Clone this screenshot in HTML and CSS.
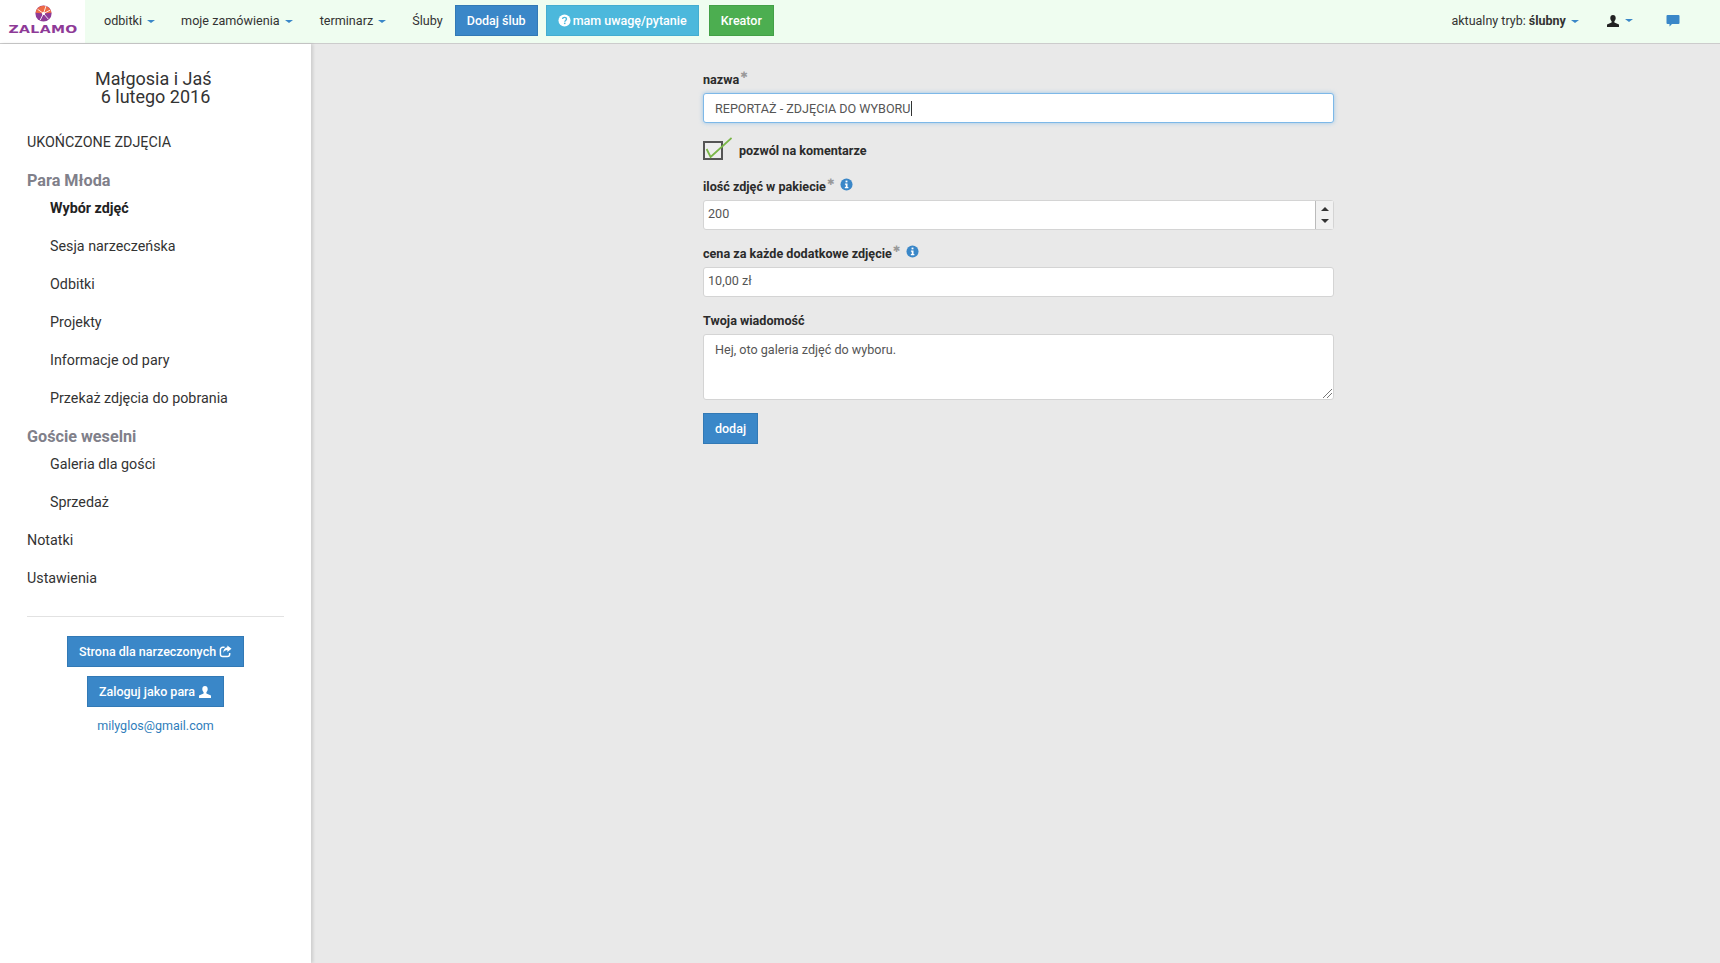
FILE: index.html
```html
<!DOCTYPE html>
<html lang="pl">
<head>
<meta charset="utf-8">
<title>Zalamo</title>
<link rel="stylesheet" href="styles.css">
</head>
<body>
<header class="navbar">
  <a class="logo">
    <svg class="logo-mark" viewBox="0 0 20 20" width="17" height="17">
      <circle cx="10" cy="10" r="9.5" fill="#8e3a97"/>
      <path d="M.6 9A9.5 9.5 0 0 1 19.4 9L10 10Z" fill="#ee6a45"/>
      <path d="M10 10 13 1M10 10 18 6M10 10 16 17M10 10 6 18M10 10 3 5" stroke="#fff" stroke-width="1"/>
      <circle cx="10" cy="10" r="1.8" fill="#fff"/>
    </svg>
    <span class="logo-text">ZALAMO</span>
  </a>
  <nav class="nav-left">
    <a class="nav-link nav-odbitki">odbitki <i class="caret"></i></a>
    <a class="nav-link nav-orders">moje zamówienia <i class="caret"></i></a>
    <a class="nav-link nav-term">terminarz <i class="caret"></i></a>
    <a class="nav-link nav-sluby">Śluby</a>
    <a class="btn btn-blue nav-btn">Dodaj ślub</a>
    <a class="btn btn-cyan nav-btn nav-btn-wide">
      <svg class="ico-q" viewBox="0 0 14 14" width="13" height="13"><circle cx="7" cy="7" r="6.5" fill="#fff"/><path d="M4.9 5.4C5 4.2 5.9 3.6 7 3.6c1.200 0 2.100.7 2.100 1.800 0 1.600-1.800 1.500-1.800 3" fill="none" stroke="#4cb8dc" stroke-width="1.500"/><rect x="6.400" y="9.300" width="1.700" height="1.600" fill="#4cb8dc"/></svg>
      mam uwagę/pytanie</a>
    <a class="btn btn-green nav-btn">Kreator</a>
  </nav>
  <nav class="nav-right">
    <a class="nav-link nav-mode">aktualny tryb: <b>ślubny</b> <i class="caret"></i></a>
    <a class="nav-link nav-user">
      <svg viewBox="0 0 14 14" width="14" height="14"><path class="fill-dark" d="M7 1C5.300 1 4.300 2.300 4.300 4c0 1.300.5 2.500 1.300 3.200v1.200L1 10.500V13h12v-2.500L8.400 8.400V7.200C9.200 6.500 9.700 5.300 9.700 4 9.700 2.300 8.700 1 7 1Z"/></svg>
      <i class="caret"></i></a>
    <a class="nav-link nav-chat">
      <svg viewBox="0 0 14 14" width="14" height="14"><path class="fill-blue" d="M1.500 1h11a1 1 0 0 1 1 1v7a1 1 0 0 1-1 1H6l-2.500 2.500V10h-2a1 1 0 0 1-1-1V2a1 1 0 0 1 1-1Z"/></svg>
    </a>
  </nav>
</header>
<div class="layout">
  <aside class="sidebar">
    <h1 class="couple">Małgosia i Jaś&nbsp;<br>6 lutego 2016</h1>
    <a class="side-top side-first">UKOŃCZONE ZDJĘCIA</a>
    <div class="side-group">Para Młoda</div>
    <a class="side-sub side-sub-first side-active">Wybór zdjęć</a>
    <a class="side-sub">Sesja narzeczeńska</a>
    <a class="side-sub">Odbitki</a>
    <a class="side-sub">Projekty</a>
    <a class="side-sub">Informacje od pary</a>
    <a class="side-sub">Przekaż zdjęcia do pobrania</a>
    <div class="side-group">Goście weselni</div>
    <a class="side-sub side-sub-first">Galeria dla gości</a>
    <a class="side-sub">Sprzedaż</a>
    <a class="side-top">Notatki</a>
    <a class="side-top">Ustawienia</a>
    <hr class="side-rule">
    <div class="side-actions">
      <a class="btn btn-blue side-btn">Strona dla narzeczonych
        <svg viewBox="0 0 14 14" width="13" height="13"><path d="M11.500 8.500V10a2.500 2.500 0 0 1-2.500 2.500H4A2.500 2.500 0 0 1 1.500 10V5A2.500 2.500 0 0 1 4 2.500h2" fill="none" stroke="#fff" stroke-width="1.600"/><path d="M9 0.500 13.500 4 9 7.500V5.500C7 5.500 5.500 6.300 4.700 8.500 4.500 5 6.300 2.700 9 2.500Z" fill="#fff"/></svg>
      </a>
      <a class="btn btn-blue side-btn">Zaloguj jako para
        <svg viewBox="0 0 14 14" width="14" height="14"><path d="M7 1C5.300 1 4.300 2.300 4.300 4c0 1.300.5 2.500 1.300 3.200v1.200L1 10.500V13h12v-2.500L8.400 8.400V7.200C9.200 6.500 9.700 5.300 9.700 4 9.700 2.300 8.700 1 7 1Z" fill="#fff"/></svg>
      </a>
      <a class="side-mail">milyglos@gmail.com</a>
    </div>
  </aside>
  <main class="content">
    <form class="form">
      <div class="label-row"><label class="label">nazwa</label><span class="req">✱</span></div>
      <div class="input input-focus"><span class="val-wide">REPORTAŻ - ZDJĘCIA DO WYBORU</span><i class="cursor"></i></div>

      <div class="check-row">
        <span class="check">
          <svg viewBox="0 0 30 26" width="30" height="26"><path d="M4.600 15 8.600 23 29.600 4" fill="none" stroke="#7ab648" stroke-width="1.800"/></svg>
        </span>
        <label class="label">pozwól na komentarze</label>
      </div>

      <div class="label-row"><label class="label">ilość zdjęć w pakiecie</label><span class="req">✱</span>
        <svg class="info" viewBox="0 0 14 14" width="13" height="13"><circle cx="7" cy="7" r="6.500" fill="#3a87c8"/><rect x="6" y="2.800" width="2" height="1.900" fill="#fff"/><path d="M5.300 6h2.800v3.800h.9V11H5.200V9.800h1V7.200h-.9Z" fill="#fff"/></svg>
      </div>
      <div class="input input-num"><span>200</span>
        <span class="spinner"><i class="spin-up"></i><i class="spin-down"></i></span>
      </div>

      <div class="label-row"><label class="label">cena za każde dodatkowe zdjęcie</label><span class="req">✱</span>
        <svg class="info" viewBox="0 0 14 14" width="13" height="13"><circle cx="7" cy="7" r="6.500" fill="#3a87c8"/><rect x="6" y="2.800" width="2" height="1.900" fill="#fff"/><path d="M5.300 6h2.800v3.800h.9V11H5.200V9.800h1V7.200h-.9Z" fill="#fff"/></svg>
      </div>
      <div class="input input-num"><span>10,00 zł</span></div>

      <div class="label-row"><label class="label">Twoja wiadomość</label></div>
      <div class="textarea">Hej, oto galeria zdjęć do wyboru.
        <svg class="grip" viewBox="0 0 9 9" width="9" height="9"><path d="M0 9 9 0M4 9 9 4" stroke="#777" stroke-width="1"/></svg>
      </div>
      <a class="btn btn-blue submit">dodaj</a>
    </form>
  </main>
</div>
</body>
</html>
```

FILE: styles.css
```css
* { box-sizing: border-box; }
html, body { margin: 0; height: 100%; }
body {
  font-family: Roboto, "Liberation Sans", sans-serif;
  font-size: 13px;
  color: #333;
  background: #e9e9e9;
  overflow: hidden;
}
a { color: inherit; text-decoration: none; }

/* top bar */
.navbar {
  display: flex;
  align-items: center;
  height: 44px;
  background: #effdf0;
  border-bottom: 1px solid #ccc;
}
.logo {
  display: flex;
  flex-direction: column;
  align-items: center;
  width: 85px;
  height: 43px;
  padding: 5px 0 0 1px;
  background: #fff;
  flex: none;
}
.logo-mark { display: block; }
.logo-text {
  font-family: "DejaVu Sans", sans-serif;
  font-weight: 700;
  font-size: 11px;
  line-height: 12px;
  letter-spacing: .3px;
  color: #8e3a97;
  margin-top: 2px;
  transform: scaleX(1.28);
}
.nav-left, .nav-right { display: flex; align-items: center; margin-bottom: 2px; }
.nav-left { padding-left: 19px; }
.nav-right { margin-left: auto; padding-right: 40px; }
.nav-link { color: #333; white-space: nowrap; font-size: 12.6px; }
.nav-mode { font-size: 12.5px; }
.nav-odbitki { margin-right: 26px; }
.nav-orders { margin-right: 27px; }
.nav-term { margin-right: 26px; }
.nav-sluby { margin-right: 12px; }
.nav-user { margin-left: 27px; display: flex; align-items: center; gap: 3px; }
.nav-chat { margin-left: 33px; display: flex; }
.fill-dark { fill: #222; }
.fill-blue { fill: #3a87c8; }
.caret {
  display: inline-block;
  width: 0;
  height: 0;
  margin-left: 2px;
  vertical-align: 2px;
  border-top: 3px solid #3a87c8;
  border-left: 4px solid transparent;
  border-right: 4px solid transparent;
}

/* buttons */
.btn {
  display: inline-flex;
  align-items: center;
  justify-content: center;
  height: 31px;
  padding: 0 12px;
  color: #fff;
  font-weight: 500;
  font-size: 12.5px;
  white-space: nowrap;
}
.btn-blue { background: #3a87c8; border: 1px solid #3279b5; }
.btn-cyan { background: #4cb8dc; border: 1px solid #44add0; }
.btn-green { background: #4cae50; border: 1px solid #43a047; }
.nav-btn { margin-right: 8px; padding: 0 11px; }
.nav-btn-wide { margin-right: 10px; }
.ico-q { margin-right: 2px; }

/* layout */
.layout { display: flex; height: 919px; }
.sidebar {
  width: 311px;
  flex: none;
  padding: 26px 27px 0;
  background: #fff;
  box-shadow: 2px 0 3px rgba(0, 0, 0, .12);
  font-size: 14.3px;
  color: #333;
}
.couple {
  margin: 0 0 26px;
  text-align: center;
  font-size: 18px;
  font-weight: 400;
  line-height: 18px;
  color: #333;
}
.side-top, .side-sub { display: block; line-height: 20px; color: #333; }
.side-top { margin-bottom: 18px; }
.side-first { margin-bottom: 18px; }
.side-group {
  font-size: 16.2px;
  font-weight: 700;
  line-height: 22px;
  color: #80808a;
  margin-bottom: 6px;
}
.side-sub { padding-left: 23px; margin-bottom: 18px; }
.side-active { font-weight: 700; color: #222; }
.side-rule { margin: 28px 0 19px; border: 0; border-top: 1px solid #e2e2e2; }
.side-actions { display: flex; flex-direction: column; align-items: center; }
.side-btn { gap: 3px; margin-bottom: 9px; padding: 0 11px; }
.side-mail { font-size: 12.5px; color: #2f7dbb; line-height: 20px; }

/* form */
.content { flex: 1; padding: 26px 0 0 392px; }
.form { width: 631px; }
.label-row { display: flex; align-items: center; height: 18px; margin-bottom: 5px; }
.label { font-weight: 700; font-size: 12.6px; color: #2b2b2b; }
.req {
  font-family: "DejaVu Sans", sans-serif;
  color: #999;
  font-size: 9px;
  font-weight: 400;
  align-self: flex-start;
  line-height: 10px;
  margin-left: 1px;
}
.info { margin-left: 6px; margin-top: -4px; }
.input {
  display: flex;
  align-items: center;
  height: 30px;
  background: #fff;
  border: 1px solid #d4d4d4;
  border-radius: 3px;
  padding: 0 11px;
  font-size: 12.6px;
  color: #555;
  margin-bottom: 14px;
}
.input-focus { border-color: #7db8e8; box-shadow: 0 0 4px rgba(102, 175, 233, .6); margin-bottom: 16px; }
.input-num { padding: 0 0 3px 4px; position: relative; }
.cursor { display: inline-block; width: 1px; height: 15px; background: #333; }
.spinner {
  display: flex;
  flex-direction: column;
  align-items: center;
  justify-content: center;
  gap: 8px;
  position: absolute;
  right: 0;
  top: 0;
  width: 18px;
  height: 28px;
  background: #f1f1f1;
  border-left: 1px solid #bbb;
}
.spin-up, .spin-down { width: 0; height: 0; border-left: 4px solid transparent; border-right: 4px solid transparent; }
.spin-up { border-bottom: 4px solid #333; }
.spin-down { border-top: 4px solid #333; }
.check-row { display: flex; align-items: center; gap: 16px; height: 22px; margin-bottom: 16px; }
.check {
  width: 20px;
  height: 19px;
  flex: none;
  border: 2px solid #555;
  background: #eee;
  position: relative;
}
.check svg { position: absolute; left: -3px; top: -9px; }
.textarea {
  position: relative;
  height: 66px;
  padding: 7px 11px;
  background: #fff;
  border: 1px solid #d4d4d4;
  border-radius: 3px;
  font-size: 12.6px;
  line-height: 16px;
  color: #555;
  margin-bottom: 13px;
}
.grip { position: absolute; right: 1px; bottom: 1px; }
.submit { width: 55px; padding: 0; }
```
